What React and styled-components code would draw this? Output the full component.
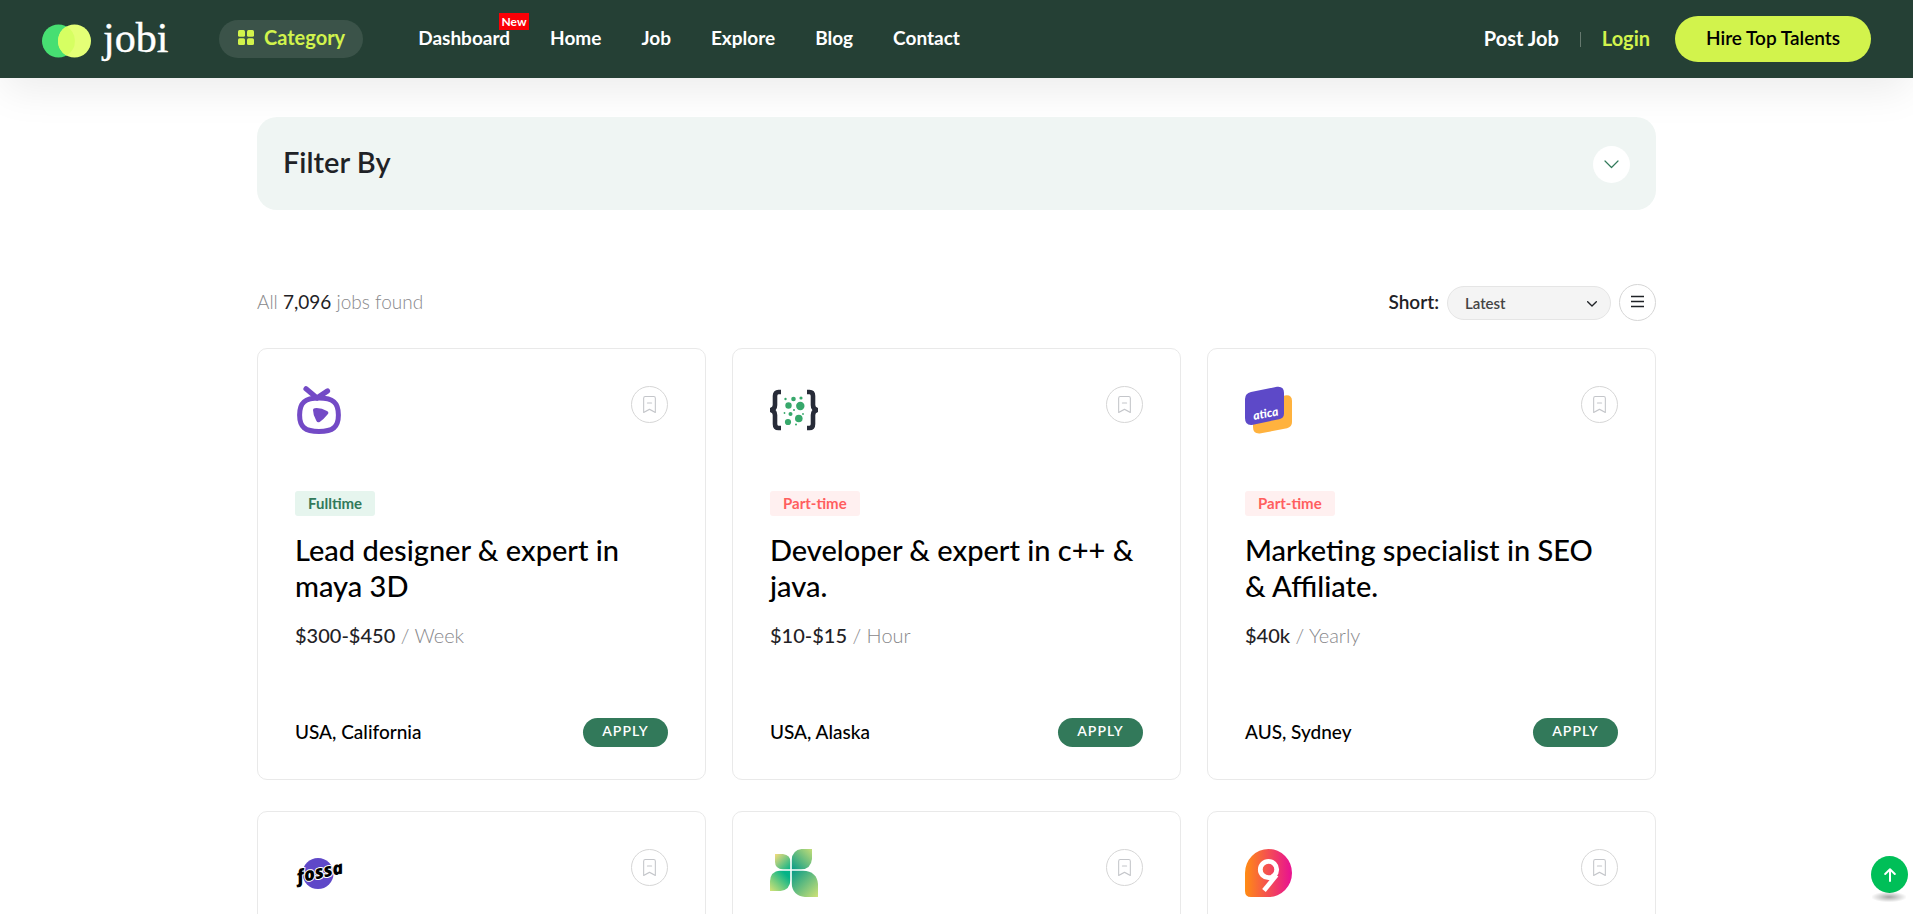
import React from "react";
import styled, { createGlobalStyle } from "styled-components";
import { BsBookmarkDash } from "react-icons/bs";

const GlobalStyle = createGlobalStyle`
  *, *::before, *::after { box-sizing: border-box; }
  body {
    margin: 0;
    background: #fff;
    color: #1f2226;
    font-family: Lato, "Liberation Sans", sans-serif;
    font-size: 20px;
    line-height: 30px;
  }
  button, select { font-family: inherit; cursor: pointer; }
  a { color: inherit; text-decoration: none; }
  svg { display: block; }
`;

const Page = styled.div`
  height: 100vh;
  overflow: hidden;
`;

const Header = styled.header`
  display: flex;
  align-items: center;
  height: 78px;
  padding: 0 42px;
  background: #254035;
  color: #fff;
  box-shadow: 0 16px 40px -4px rgba(0, 0, 0, 0.08);
`;

const Brand = styled.a`
  display: block;
  margin-right: 49px;
`;

const CategoryButton = styled.button`
  display: flex;
  align-items: center;
  gap: 10px;
  height: 38px;
  margin-right: 55px;
  padding: 0 18px 4px 19px;
  border: 0;
  border-radius: 19px;
  background: #3b5349;
  color: #d2f34c;
  font-size: 20px;
  font-weight: 700;
`;

const Nav = styled.nav`
  display: flex;
  gap: 40px;
  padding-bottom: 2px;
  font-size: 19px;
  font-weight: 700;
`;

const NavLink = styled.a`
  position: relative;
`;

const NewBadge = styled.span`
  position: absolute;
  top: -10px;
  right: -19px;
  width: 30px;
  height: 17px;
  background: #fb0006;
  color: #fff;
  font-size: 12px;
  line-height: 17px;
  text-align: center;
`;

const Account = styled.div`
  display: flex;
  align-items: center;
  margin-left: auto;
  font-size: 20px;
  font-weight: 700;
`;

const AccountLink = styled.a`
  padding-bottom: 2px;
  color: ${(p) => (p.$accent ? "#d2f34c" : "inherit")};
`;

const Divider = styled.span`
  width: 1px;
  height: 15px;
  margin: 0 21px;
  background: #66796f;
`;

const HireButton = styled.a`
  width: 196px;
  height: 46px;
  margin-left: 25px;
  border-radius: 23px;
  background: #d2f34c;
  color: #000;
  font-size: 19px;
  font-weight: 600;
  line-height: 44px;
  text-align: center;
`;

const Main = styled.main`
  max-width: 1399px;
  margin: 39px auto 0;
`;

const FilterPanel = styled.section`
  display: flex;
  align-items: flex-start;
  justify-content: space-between;
  padding: 29px 26px 27px;
  border-radius: 20px;
  background: #eff5f3;
`;

const FilterTitle = styled.h2`
  margin: 0;
  font-size: 29px;
  font-weight: 600;
  line-height: 32px;
`;

const RoundButton = styled.button`
  display: flex;
  align-items: center;
  justify-content: center;
  width: 37px;
  height: 37px;
  padding: 0;
  border: ${(p) => (p.$outlined ? "1px solid #d6d6d6" : "0")};
  border-radius: 50%;
  background: #fff;
  color: ${(p) => p.$color};
`;

const ResultsBar = styled.div`
  display: flex;
  align-items: center;
  justify-content: space-between;
  margin: 74px 0 27px;
`;

const Count = styled.p`
  margin: 0;
  padding-bottom: 2px;
  color: #88888b;
  font-size: 19px;
  font-weight: 300;

  strong { color: #1f2226; font-weight: 400; }
`;

const Sorting = styled.div`
  display: flex;
  align-items: center;
  gap: 8px;
`;

const SortLabel = styled.label`
  padding-bottom: 2px;
  font-size: 19px;
  font-weight: 600;
`;

const SelectWrap = styled.div`
  position: relative;
  width: 164px;
  height: 34px;

  svg {
    position: absolute;
    top: 15px;
    right: 14px;
    pointer-events: none;
  }
`;

const Select = styled.select`
  display: block;
  width: 100%;
  height: 100%;
  padding: 0 17px;
  border: 1px solid #e5e5e5;
  border-radius: 17px;
  background: #f4f4f4;
  color: #444;
  appearance: none;
  font-size: 15px;
  font-weight: 600;
`;

const Grid = styled.div`
  display: grid;
  grid-template-columns: repeat(3, 1fr);
  gap: 31px 26px;
`;

const Card = styled.article`
  display: flex;
  flex-direction: column;
  min-height: 432px;
  padding: 37px 37px 32px;
  border: 1px solid #e9e9e9;
  border-radius: 10px;
`;

const CardTop = styled.div`
  display: flex;
  align-items: flex-start;
  justify-content: space-between;
  height: 105px;
`;

const Tag = styled.span`
  align-self: flex-start;
  height: 25px;
  padding: 0 13px;
  border-radius: 3px;
  background: ${(p) => (p.$full ? "#e6f5ee" : "#fff0f0")};
  color: ${(p) => (p.$full ? "#32795a" : "#ff5e5e")};
  font-size: 15px;
  font-weight: 700;
  line-height: 24px;
`;

const JobTitle = styled.a`
  margin-top: 16px;
  color: #000;
  font-size: 29px;
  font-weight: 500;
  line-height: 36px;
`;

const Salary = styled.p`
  margin: 16px 0 0;
  color: #88888b;
  font-weight: 300;

  strong { color: #1f2226; font-weight: 500; }
`;

const CardFoot = styled.div`
  display: flex;
  align-items: center;
  justify-content: space-between;
  margin-top: auto;
  color: #000;
  font-size: 19px;
  font-weight: 500;
`;

const ApplyLink = styled.a`
  width: 85px;
  height: 29px;
  border-radius: 15px;
  background: #32795a;
  color: #fff;
  font-size: 14px;
  font-weight: 600;
  letter-spacing: 1px;
  line-height: 26px;
  text-align: center;
`;

const TopButton = styled.button`
  position: fixed;
  right: 5px;
  bottom: 21px;
  display: flex;
  align-items: center;
  justify-content: center;
  width: 37px;
  height: 37px;
  padding: 0;
  border: 0;
  border-radius: 50%;
  background: #00bf58;

  &::after {
    content: "";
    position: absolute;
    top: 36px;
    left: 1px;
    width: 34px;
    height: 10px;
    background: radial-gradient(ellipse at center, rgba(0, 0, 0, 0.35), rgba(0, 0, 0, 0) 75%);
  }
`;

const BrandLogo = () => (
  <svg width="128" height="58" viewBox="0 0 128 58" role="img" aria-label="jobi">
    <circle cx="16.500" cy="31" r="16.500" fill="#47df72" />
    <circle cx="32.500" cy="31" r="16.500" fill="#e4ff76" />
    <path d="M24.500 16.600A16.500 16.500 0 0 1 24.500 45.400A16.500 16.500 0 0 1 24.500 16.600Z" fill="#d6ff62" />
    <text x="61" y="42" fill="#fff" stroke="#fff" strokeWidth="0.400" fontFamily="Liberation Serif, serif" fontSize="42">jobi</text>
  </svg>
);

const GridIcon = () => (
  <svg width="16" height="15" viewBox="0 0 16 15" fill="currentColor">
    <rect width="7" height="6.700" rx="1.500" />
    <rect x="9" width="7" height="6.700" rx="1.500" />
    <rect y="8.300" width="7" height="6.700" rx="1.500" />
    <rect x="9" y="8.300" width="7" height="6.700" rx="1.500" />
  </svg>
);

const Chevron = ({ width, stroke }) => (
  <svg width={width} height={width * 0.6} viewBox="0 0 15 9" fill="none" stroke="currentColor" strokeWidth={stroke} strokeLinecap="round" strokeLinejoin="round">
    <path d="M1 1L7.500 7.500L14 1" />
  </svg>
);

const ListIcon = () => (
  <svg width="13" height="15" viewBox="0 0 13 15" fill="none" stroke="currentColor" strokeWidth="1.300">
    <path d="M0 1.500H13M0 6.500H13M0 11.500H13" />
  </svg>
);

const ArrowUp = () => (
  <svg width="12" height="14" viewBox="0 0 12 14" fill="none" stroke="#fff" strokeWidth="2" strokeLinecap="round" strokeLinejoin="round">
    <path d="M6 13V1.500M1.200 6L6 1.300L10.800 6" />
  </svg>
);

const PlayLogo = () => (
  <svg width="48" height="48" viewBox="0 0 48 48" fill="none">
    <path d="M11 2.800L22 12L32.500 5" stroke="#734ac6" strokeWidth="5.200" strokeLinecap="round" strokeLinejoin="round" />
    <path d="M24 12C38 12 43.400 16.500 43.400 29C43.400 41 38 45.500 24 45.500C10 45.500 4.600 41 4.600 29C4.600 16.500 10 12 24 12Z" stroke="#734ac6" strokeWidth="5" />
    <path d="M19.800 22.200Q26 21.600 32 25Q34.500 26.500 32.500 28.600Q29 33 25 35.800Q22.500 37.400 21.200 34.500Q18 29 18 24Q18 22.400 19.800 22.200Z" fill="#734ac6" />
  </svg>
);

const BracesLogo = () => (
  <svg width="48" height="48" viewBox="0 0 48 48">
    <g fill="none" stroke="#272b38" strokeWidth="4.600" strokeLinejoin="round">
      <path d="M11 6H8.500Q5 6 5 10V19Q5 23 1 24Q5 25 5 29V38Q5 42 8.500 42H11" />
      <path d="M37 6H39.500Q43 6 43 10V19Q43 23 47 24Q43 25 43 29V38Q43 42 39.500 42H37" />
    </g>
    <g fill="#37a86b">
      <circle cx="15.500" cy="13" r="1.200" /><circle cx="23.500" cy="13" r="2.300" /><circle cx="31" cy="12" r="1.600" />
      <circle cx="18.500" cy="19.500" r="3.200" /><circle cx="30.300" cy="20" r="4.200" /><circle cx="24" cy="24" r="1" />
      <circle cx="14.500" cy="27" r="0.900" /><circle cx="20.500" cy="28" r="2" /><circle cx="33" cy="28" r="0.900" />
      <circle cx="28.800" cy="32.500" r="3.800" /><circle cx="18" cy="36" r="3.100" /><circle cx="26" cy="38.500" r="1" />
    </g>
  </svg>
);

const AticaLogo = () => (
  <svg width="48" height="48" viewBox="0 0 48 48">
    <path d="M14 16L40 9.500Q47 8.500 47 15V36Q47 41 42 42.200L16 47.300Q8 48.500 8 41V22Q8 17.500 14 16Z" fill="#ffb23e" />
    <path d="M6 6L32 0.800Q39 0 39 7V27.500Q39 32 34 33.200L8 38.700Q0 40 0 32V13Q0 7.300 6 6Z" fill="#5d49c8" />
    <text x="9" y="34" transform="rotate(-11 9 34)" fill="#fff" fontFamily="Lato, sans-serif" fontSize="12" fontWeight="900" fontStyle="italic">atica</text>
  </svg>
);

const FossaLogo = () => (
  <svg width="48" height="48" viewBox="0 0 48 48" overflow="visible">
    <circle cx="23" cy="24.500" r="15.500" fill="#5f48c8" />
    <text x="3" y="34" transform="rotate(-12 3 34)" fill="#000" stroke="#fff" strokeWidth="2" paintOrder="stroke" fontFamily="Open Sans, sans-serif" fontSize="18" fontWeight="800" fontStyle="italic">fossa</text>
  </svg>
);

const CloverLogo = () => (
  <svg width="48" height="48" viewBox="0 0 48 48">
    <defs>
      <linearGradient id="leafA" x1="0" y1="0" x2="1" y2="1"><stop stopColor="#f6dc7c" /><stop offset="1" stopColor="#04b387" /></linearGradient>
      <linearGradient id="leafB" x1="1" y1="0" x2="0" y2="1"><stop stopColor="#c3dd78" /><stop offset="1" stopColor="#049a87" /></linearGradient>
      <linearGradient id="leafC" x1="0" y1="1" x2="1" y2="0"><stop stopColor="#d6e377" /><stop offset="0.800" stopColor="#04b387" /></linearGradient>
      <linearGradient id="leafD" x1="1" y1="1" x2="0" y2="0"><stop stopColor="#cfe276" /><stop offset="1" stopColor="#049a87" /></linearGradient>
    </defs>
    <path d="M5 5H13Q20.500 6 20.500 13V20.500H13Q5 19.500 5 13Z" fill="url(#leafA)" />
    <path d="M42 0V10Q41 20 31 20.500H21.500V11Q22.500 1 31.500 0Z" fill="url(#leafB)" />
    <path d="M20.500 21.500V31Q20 41 10.500 42H0V32Q0.500 22.500 10 21.500Z" fill="url(#leafC)" />
    <path d="M21.500 21.500H33Q47 22.500 48 35V48H35Q22.500 47 21.500 34Z" fill="url(#leafD)" />
    <path d="M21 0V48M0 21H48" stroke="#fff" strokeWidth="1.200" />
  </svg>
);

const NineLogo = () => (
  <svg width="48" height="48" viewBox="0 0 48 48">
    <defs>
      <linearGradient id="nine"><stop stopColor="#ff8c13" /><stop offset="0.950" stopColor="#e9168d" /></linearGradient>
    </defs>
    <path d="M23.500 0A23.500 24 0 0 1 23.500 48H6Q0 48 0 42V24A23.500 24 0 0 1 23.500 0Z" fill="url(#nine)" />
    <circle cx="23.500" cy="20.500" r="8.200" fill="none" stroke="#fff" strokeWidth="4.800" />
    <path d="M31.500 26L19 41.500" stroke="#fff" strokeWidth="4.600" />
  </svg>
);

const navItems = ["Dashboard", "Home", "Job", "Explore", "Blog", "Contact"];

const jobs = [
  { Logo: PlayLogo, type: "Fulltime", title: "Lead designer & expert in maya 3D", pay: "$300-$450", per: "Week", place: "USA, California" },
  { Logo: BracesLogo, type: "Part-time", title: "Developer & expert in c++ & java.", pay: "$10-$15", per: "Hour", place: "USA, Alaska" },
  { Logo: AticaLogo, type: "Part-time", title: "Marketing specialist in SEO & Affiliate.", pay: "$40k", per: "Yearly", place: "AUS, Sydney" },
  { Logo: FossaLogo },
  { Logo: CloverLogo },
  { Logo: NineLogo },
];

const JobCard = ({ Logo, type, title, pay, per, place }) => (
  <Card>
    <CardTop>
      <Logo />
      <RoundButton $outlined $color="#c4c6ca" aria-label="Save job">
        <BsBookmarkDash size={17} />
      </RoundButton>
    </CardTop>
    {title && (
      <>
        <Tag $full={type === "Fulltime"}>{type}</Tag>
        <JobTitle href="#job">{title}</JobTitle>
        <Salary><strong>{pay}</strong> / {per}</Salary>
        <CardFoot>
          <span>{place}</span>
          <ApplyLink href="#apply">APPLY</ApplyLink>
        </CardFoot>
      </>
    )}
  </Card>
);

export default function App() {
  return (
    <Page>
      <GlobalStyle />
      <Header>
        <Brand href="#home"><BrandLogo /></Brand>
        <CategoryButton><GridIcon />Category</CategoryButton>
        <Nav>
          {navItems.map((item) => (
            <NavLink key={item} href={`#${item.toLowerCase()}`}>
              {item}
              {item === "Dashboard" && <NewBadge>New</NewBadge>}
            </NavLink>
          ))}
        </Nav>
        <Account>
          <AccountLink href="#post">Post Job</AccountLink>
          <Divider />
          <AccountLink $accent href="#login">Login</AccountLink>
          <HireButton href="#hire">Hire Top Talents</HireButton>
        </Account>
      </Header>
      <Main>
        <FilterPanel>
          <FilterTitle>Filter By</FilterTitle>
          <RoundButton $color="#32795a" aria-label="Toggle filters"><Chevron width={15} stroke={1.2} /></RoundButton>
        </FilterPanel>
        <ResultsBar>
          <Count>All <strong>7,096</strong> jobs found</Count>
          <Sorting>
            <SortLabel htmlFor="sort">Short:</SortLabel>
            <SelectWrap>
              <Select id="sort"><option>Latest</option></Select>
              <Chevron width={10} stroke={2} />
            </SelectWrap>
            <RoundButton $outlined $color="#1f2226" aria-label="List view"><ListIcon /></RoundButton>
          </Sorting>
        </ResultsBar>
        <Grid>
          {jobs.map((job, i) => <JobCard key={i} {...job} />)}
        </Grid>
      </Main>
      <TopButton aria-label="Back to top"><ArrowUp /></TopButton>
    </Page>
  );
}
